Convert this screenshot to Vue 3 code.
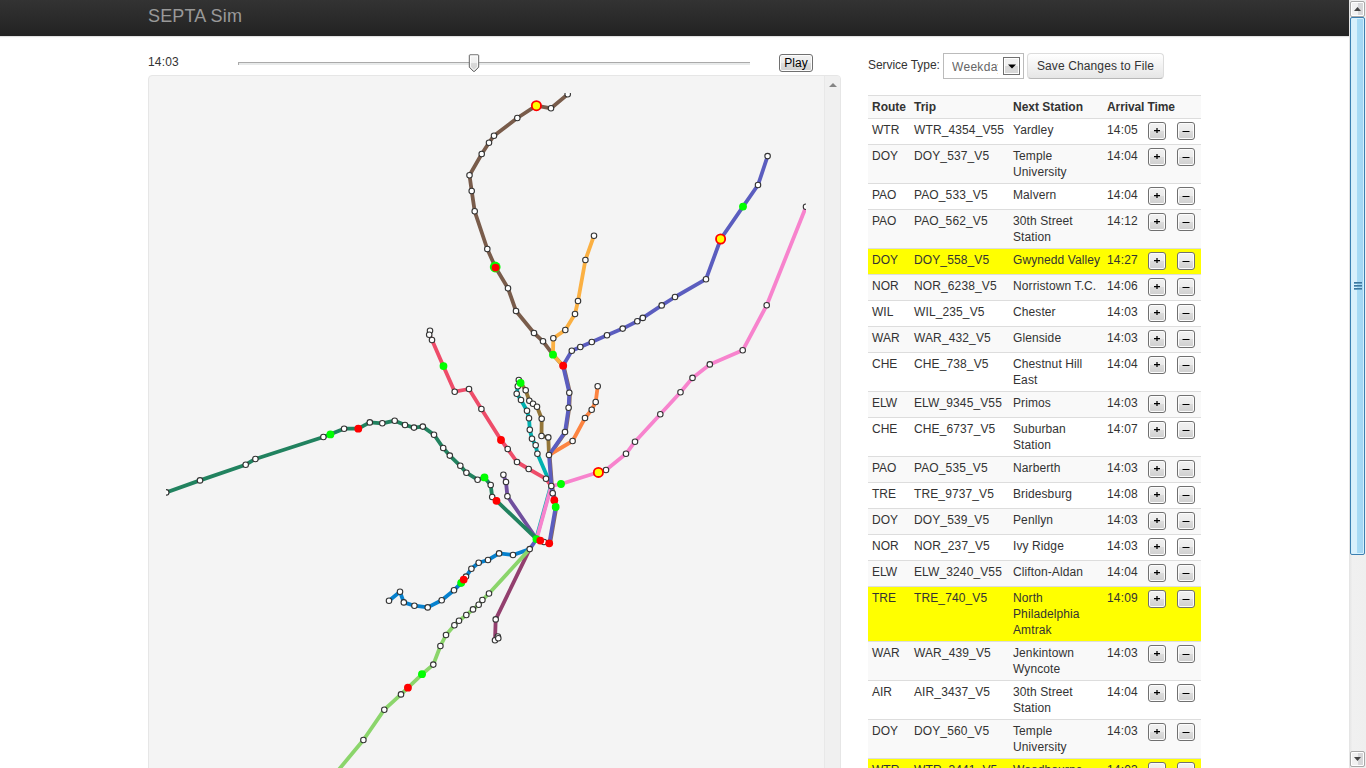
<script setup>
const lines = [
  { id: 'LAN', color: '#795c4b', pts: [[567.7,94.3],[551,108.3],[536.3,105.7],[517.3,118],[494,135.7],[489,142.7],[481.7,154],[469.5,175.3],[471.7,191],[474.7,211.3],[487.3,249],[495.3,267],[508,288.3],[516,311],[534,333],[543,341.3],[553,354.7],[563,365.7]] },
  { id: 'WTR', color: '#fbb042', pts: [[594,235.7],[585.4,260],[578,301],[575,314],[565.3,330],[553.3,338.3],[553,354.7],[563,365.7]] },
  { id: 'GLN', color: '#fd8441', pts: [[597.7,386.3],[595.7,402],[591.7,409.7],[585,418],[572.6,441],[549,455]] },
  { id: 'CHE', color: '#947639', pts: [[520.7,382.7],[525.7,390.3],[529.3,400.7],[533,403.7],[537,406.7],[541.7,418.7],[541.5,436],[548.3,437.4],[549,455]] },
  { id: 'CHW', color: '#00b1b0', pts: [[518.8,380],[517.8,386.2],[516.7,393.7],[521,400],[527,410.7],[529,418.3],[529.8,429.7],[532,438.7],[535.7,445.2],[537.4,453.7],[551.3,486]] },
  { id: 'NOR', color: '#ee4c69', pts: [[430,330.7],[429.2,334.7],[432,340],[443.3,366],[454.7,391.7],[469,389],[481.4,409],[501,440],[507.7,449],[517,462],[528.7,469],[546,478.8],[551.3,486]] },
  { id: 'TRE', color: '#f783cd', pts: [[806,206.8],[766.7,305.3],[742.7,350.3],[709.8,364.4],[692.5,377.9],[680.5,392.3],[660.3,414.3],[635,441.7],[626,453.8],[606,470],[598.3,472.3],[561,484],[551.3,486],[536.7,539]] },
  { id: 'CYN', color: '#704f9e', pts: [[503.4,474.8],[506,482],[507.4,496.2],[536.7,539]] },
  { id: 'PAO', color: '#21825f', pts: [[166.2,492.4],[200,480.4],[245.7,464.7],[255.4,459],[323.4,437],[330.3,434.3],[344.1,428.7],[358.3,428.7],[369.8,422.4],[382.3,423.3],[394.7,420.7],[405,425],[414,427.6],[422.8,426.6],[434,434.7],[443.2,448],[449.8,455.6],[460.3,465.8],[466.4,472.7],[477.6,479.7],[484.4,477.4],[490.7,485],[492.2,497],[496.4,500.7],[536.7,539]] },
  { id: 'AIR', color: '#933f6e', pts: [[529.7,549.1],[495.7,619.4],[495,640.3],[497.8,636.5],[498.3,638.2]] },
  { id: 'MED', color: '#0681ce', pts: [[389,600.7],[400,591.8],[403.8,602.4],[414.4,605.7],[427.7,607.4],[441.7,600.3],[454,590.2],[461,583.3],[463.7,579.7],[466,576.6],[471.4,568.7],[478.7,562.7],[488,560],[499.1,553.4],[513,555],[529.7,549.1]] },
  { id: 'WIL', color: '#8bd56b', pts: [[529.7,549.1],[489,593.5],[482.4,600],[478.7,604.7],[473,609.4],[466.3,615],[459,620.7],[454.4,625.2],[446,635],[440.4,646],[433.3,664.6],[422,674.3],[408,687.7],[401,694.4],[384.3,709.7],[363.4,740],[331,779]] },
  { id: 'DOY', color: '#5b5dbf', pts: [[767.6,156.1],[758,185],[743,206.7],[720.7,239],[706,279.2],[675,297],[661.7,305.4],[642.8,317.9],[637.3,321.2],[622.7,328.6],[607,335.3],[591.8,342],[580.3,347],[571.8,350.8],[563,365.7],[569.3,392.7],[568.6,407.8],[565,432],[549,455],[551.3,486],[552.7,493.3],[554.4,500],[555.6,507],[549.3,543.3],[544,542],[536.7,539],[529.7,549.1]] }
]
// Thin edges of routes that run underneath another route.
const underlays = [
  { color: '#8a6a5a', pts: '563.6,365.7 570,392.7 569.3,407.7 565.7,432 549.6,455 552,486 555,500 556.4,507 550.1,543.3' },
  { color: '#00b1b0', pts: '550.8,486 536.1,539' }
]
const stops = [...new Map(lines.flatMap(l => l.pts).map(p => [p.join(), p])).values()]
const trains = [
  { c: 'yellow', x: 536.4, y: 105.7 }, { c: 'mixed', x: 495.2, y: 267 },
  { c: 'green', x: 743, y: 206.6 }, { c: 'yellow', x: 720.6, y: 239 },
  { c: 'green', x: 553, y: 354.7 }, { c: 'red', x: 563.2, y: 365.7 },
  { c: 'green', x: 443.5, y: 366.1 }, { c: 'red', x: 501, y: 440 },
  { c: 'green', x: 520.6, y: 382.9 }, { c: 'green', x: 561, y: 484 },
  { c: 'yellow', x: 598.4, y: 472.4 }, { c: 'red', x: 554.3, y: 500.2 },
  { c: 'green', x: 555.7, y: 507 }, { c: 'green', x: 536.4, y: 539.1 },
  { c: 'red', x: 540.3, y: 540.6 }, { c: 'red', x: 549.2, y: 543.3 },
  { c: 'green', x: 330.4, y: 434.4 }, { c: 'red', x: 358.3, y: 428.7 },
  { c: 'green', x: 484.5, y: 477.4 }, { c: 'red', x: 496.5, y: 500.8 },
  { c: 'green', x: 461.2, y: 582.8 }, { c: 'red', x: 463.7, y: 579.6 },
  { c: 'green', x: 422, y: 674.2 }, { c: 'red', x: 407.9, y: 687.7 }
]
const rows = [
  ['WTR', 'WTR_4354_V55', 'Yardley', '14:05'],
  ['DOY', 'DOY_537_V5', 'Temple University', '14:04'],
  ['PAO', 'PAO_533_V5', 'Malvern', '14:04'],
  ['PAO', 'PAO_562_V5', '30th Street Station', '14:12'],
  ['DOY', 'DOY_558_V5', 'Gwynedd Valley', '14:27', true],
  ['NOR', 'NOR_6238_V5', 'Norristown T.C.', '14:06'],
  ['WIL', 'WIL_235_V5', 'Chester', '14:03'],
  ['WAR', 'WAR_432_V5', 'Glenside', '14:03'],
  ['CHE', 'CHE_738_V5', 'Chestnut Hill East', '14:04'],
  ['ELW', 'ELW_9345_V55', 'Primos', '14:03'],
  ['CHE', 'CHE_6737_V5', 'Suburban Station', '14:07'],
  ['PAO', 'PAO_535_V5', 'Narberth', '14:03'],
  ['TRE', 'TRE_9737_V5', 'Bridesburg', '14:08'],
  ['DOY', 'DOY_539_V5', 'Penllyn', '14:03'],
  ['NOR', 'NOR_237_V5', 'Ivy Ridge', '14:03'],
  ['ELW', 'ELW_3240_V55', 'Clifton-Aldan', '14:04'],
  ['TRE', 'TRE_740_V5', 'North Philadelphia Amtrak', '14:09', true],
  ['WAR', 'WAR_439_V5', 'Jenkintown Wyncote', '14:03'],
  ['AIR', 'AIR_3437_V5', '30th Street Station', '14:04'],
  ['DOY', 'DOY_560_V5', 'Temple University', '14:03'],
  ['WTR', 'WTR_3441_V5', 'Woodbourne', '14:03', true]
]
</script>

<template>
  <div class="screen">
    <div class="page">
      <header class="navbar"><span class="brand">SEPTA Sim</span></header>
      <main class="container">
        <section class="left">
          <div class="controls">
            <span class="clock">14:03</span>
            <div class="slider">
              <div class="track"></div>
              <svg class="thumb" width="12" height="19" viewBox="0 0 12 19">
                <defs><linearGradient id="thumbFill" x1="0" y1="0" x2="0" y2="1">
                  <stop offset="0" stop-color="#f6f6f6" /><stop offset=".5" stop-color="#eeeeee" />
                  <stop offset=".5" stop-color="#d9d9d9" /><stop offset="1" stop-color="#d2d2d2" />
                </linearGradient></defs>
                <path d="M2 .8H10Q10.7 .8 10.7 1.6V13.2L6.8 17.2Q6 17.9 5.2 17.2L1.3 13.2V1.6Q1.3 .8 2 .8Z" fill="url(#thumbFill)" stroke="#666" />
                <path d="M2.5 12.8V2H9.5V12.8L6 16.2Z" fill="none" stroke="#fff" stroke-width=".8" />
              </svg>
            </div>
            <button class="native play">Play</button>
          </div>
          <div class="well">
            <svg class="map" width="640" height="693" viewBox="166 93 640 693">
              <polyline v-for="u in underlays" :key="u.color" :points="u.pts" :stroke="u.color" class="line" />
              <polyline v-for="l in lines" :key="l.id" :points="l.pts.join(' ')" :stroke="l.color" class="line" />
              <circle v-for="p in stops" :key="p.join()" :cx="p[0]" :cy="p[1]" r="2.75" class="stop" />
              <g v-for="(t, i) in trains" :key="'t' + i">
                <circle v-if="t.c === 'yellow'" :cx="t.x" :cy="t.y" r="4.6" fill="#ff0" stroke="#f00" stroke-width="1.8" />
                <template v-else-if="t.c === 'mixed'">
                  <circle :cx="t.x" :cy="t.y" r="5.4" fill="#0f0" />
                  <circle :cx="t.x + .4" :cy="t.y + .6" r="3.9" fill="#f00" />
                </template>
                <circle v-else :cx="t.x" :cy="t.y" r="3.9" :fill="t.c === 'red' ? '#f00' : '#0f0'" />
              </g>
            </svg>
            <div class="gutter">
              <svg width="8" height="4" viewBox="0 0 8 4"><path d="M0 4L4 0L8 4Z" fill="#858585" /></svg>
            </div>
          </div>
        </section>
        <aside class="right">
          <div class="toolbar">
            <span class="label">Service Type:</span>
            <div class="select">
              <span class="value">Weekday</span>
              <span class="drop"><svg width="8" height="5" viewBox="0 0 8 5"><path d="M0 .5H8L4 4.5Z" fill="#000" /></svg></span>
            </div>
            <button class="save">Save Changes to File</button>
          </div>
          <table>
            <colgroup><col class="c1"><col class="c2"><col class="c3"><col class="c4"><col class="c5"><col class="c6"></colgroup>
            <thead><tr><th>Route</th><th>Trip</th><th>Next Station</th><th colspan="3" class="arrival">Arrival Time</th></tr></thead>
            <tbody>
              <tr v-for="r in rows" :key="r[1]" :class="{ hot: r[4] }">
                <td>{{ r[0] }}</td><td class="trip">{{ r[1] }}</td><td>{{ r[2] }}</td><td>{{ r[3] }}</td>
                <td><button class="native sq"><svg width="8" height="8" viewBox="0 0 8 8"><path d="M1 3.5h6M4 1v5" fill="none" stroke="#000" stroke-width="1.25" /></svg></button></td>
                <td><button class="native sq"><svg width="8" height="8" viewBox="0 0 8 8"><path d="M.5 4h7v1h-7z" fill="#000" /></svg></button></td>
              </tr>
            </tbody>
          </table>
        </aside>
      </main>
    </div>
    <div class="scrollbar">
      <div class="end"><svg width="7" height="4" viewBox="0 0 7 4"><path d="M0 4L3.5 0L7 4Z" fill="#444" /></svg></div>
      <div class="bar"><i></i><i></i><i></i></div>
      <div class="end last"><svg width="7" height="4" viewBox="0 0 7 4"><path d="M0 0L3.5 4L7 0Z" fill="#444" /></svg></div>
    </div>
  </div>
</template>

<style>
body { margin: 0; overflow: hidden; }
</style>
<style scoped>
.screen { display: flex; width: 1366px; height: 768px; overflow: hidden; background: #fff; font: 12px/16px "Liberation Sans", Arial, sans-serif; color: #333; }
button { font: inherit; margin: 0; box-sizing: border-box; }
.page { width: 1349px; height: 768px; overflow: hidden; }
.navbar { height: 36px; background: linear-gradient(#333, #222); box-shadow: 0 1px 1px rgba(0,0,0,.12); }
.brand { display: block; padding: 7px 0 0 148px; font-size: 18px; line-height: 18px; color: #999; letter-spacing: .15px; }
.container { display: flex; gap: 27px; padding-left: 148px; }
.left { width: 693px; }
.controls { display: flex; height: 39px; }
.clock { width: 90px; padding-top: 18px; letter-spacing: .15px; }
.slider { position: relative; width: 512px; }
.track { margin-top: 26px; height: 3px; box-sizing: border-box; border-top: 1px solid #aaa; border-left: 1px solid #aaa; background: #e8eaea; }
.thumb { position: absolute; left: 230px; top: 18px; }
.native { padding: 0; border: 1px solid #707070; border-radius: 3px; background: linear-gradient(#f2f2f2, #ebebeb 50%, #dddddd 50%, #cfcfcf); box-shadow: inset 0 0 0 1px #fcfcfc; color: #000; }
.play { width: 34px; height: 18px; margin: 18px 0 0 29px; line-height: 16px; }
.well { display: flex; justify-content: space-between; box-sizing: border-box; height: 711px; border: 1px solid #e6e6e6; border-radius: 4px; background: #f4f4f4; overflow: hidden; }
.map { margin: 17px 0 0 17px; overflow: hidden; }
.line { fill: none; stroke-width: 3.8; stroke-linejoin: round; }
.stop { fill: #fff; stroke: #333; stroke-width: 1.1; }
.gutter { width: 16px; box-sizing: border-box; border-left: 1px solid #e8e8e8; background: #f0f0f0; display: flex; justify-content: center; padding-top: 7px; }
.right { width: 333px; }
.toolbar { display: flex; height: 59px; padding-top: 17px; box-sizing: border-box; }
.label { width: 75px; padding-top: 4px; white-space: nowrap; letter-spacing: -.05px; }
.select { display: flex; box-sizing: border-box; width: 81px; height: 26px; border: 1px solid #bbb; padding: 3px; justify-content: space-between; }
.value { width: 46px; margin-left: 5px; padding-top: 2px; overflow: hidden; color: #666; letter-spacing: .3px; }
.drop { display: flex; width: 17px; height: 18px; box-sizing: border-box; border: 1px solid #707070; box-shadow: inset 0 0 0 1px #fff; background: linear-gradient(#f0f0f0 50%, #d8d8d8 50%); align-items: center; justify-content: center; }
.save { width: 137px; height: 26px; margin-left: 3px; padding: 0; border: 1px solid #dcdcdc; border-bottom-color: #b8b8b8; border-radius: 4px; background: linear-gradient(#fff, #e6e6e6); color: #333; letter-spacing: .12px; white-space: nowrap; }
table { width: 333px; table-layout: fixed; border-collapse: separate; border-spacing: 0; }
.c1 { width: 42px; } .c2 { width: 99px; } .c3 { width: 94px; } .c4 { width: 41px; } .c5 { width: 29px; } .c6 { width: 28px; }
th, td { padding: 3px 4px; border-top: 1px solid #ddd; text-align: left; vertical-align: top; }
th { background: #f9f9f9; white-space: nowrap; }
th.arrival { letter-spacing: -.1px; }
tbody tr:nth-child(even) { background: #f9f9f9; }
tbody tr.hot { background: #ff0; }
td.trip { white-space: nowrap; letter-spacing: .12px; }
td:nth-child(3) { letter-spacing: .1px; padding-right: 0; }
td:nth-child(4) { letter-spacing: .15px; }
td:nth-child(n+4) { padding-right: 0; }
td:nth-child(n+5) { line-height: 0; }
.sq { display: flex; width: 18px; height: 18px; align-items: center; justify-content: center; padding: 0; }
tbody td { height: 19px; }
.scrollbar { display: flex; flex-direction: column; width: 17px; height: 768px; box-sizing: border-box; padding: 1px; background: linear-gradient(90deg, #e3e3e3, #f0f0f0 20%, #efefef); }
.end { display: flex; width: 15px; height: 16px; box-sizing: border-box; border: 1px solid #a8a8a8; border-radius: 2px; box-shadow: inset 0 0 0 1px #fff; background: linear-gradient(90deg, #f1f1f1 50%, #d7d7d9 50%); align-items: center; justify-content: center; }
.bar { display: flex; flex-direction: column; gap: 1px; width: 15px; height: 538px; box-sizing: border-box; border: 1px solid #3c7fb1; border-radius: 2px; box-shadow: inset 0 0 0 1px #d5f0fc; background: linear-gradient(90deg, #d9f0fc 45%, #a9dbf5 46%, #a0d5f2); align-items: center; justify-content: center; }
.bar i { width: 8px; height: 2px; background: linear-gradient(#2c628b, #77b5d6); }
.last { margin-top: auto; }
</style>
